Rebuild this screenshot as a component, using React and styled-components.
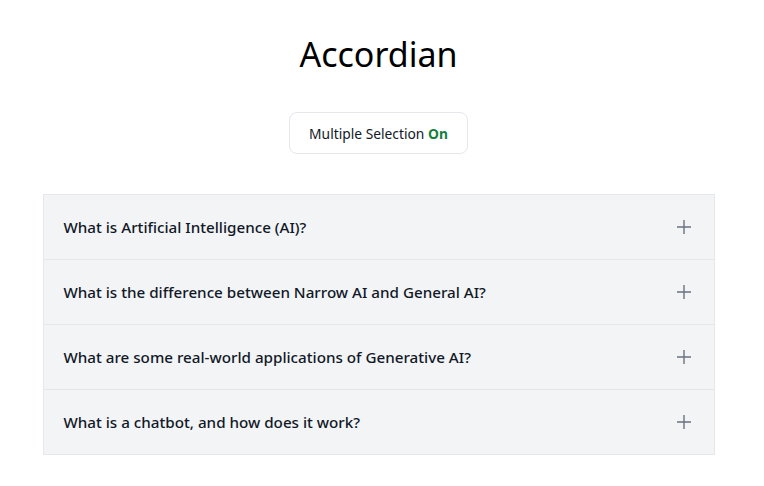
import React, { useState } from 'react';
import styled, { createGlobalStyle } from 'styled-components';

const GlobalStyle = createGlobalStyle`
  body {
    margin: 0;
    background: #ffffff;
    font-family: "Noto Sans", "Open Sans", sans-serif;
    color: #111827;
  }
`;

const faqs = [
  { id: 1, question: 'What is Artificial Intelligence (AI)?', answer: 'AI is the simulation of human intelligence by machines.' },
  { id: 2, question: 'What is the difference between Narrow AI and General AI?', answer: 'Narrow AI handles one task; General AI could handle any.' },
  { id: 3, question: 'What are some real-world applications of Generative AI?', answer: 'Text, image, music and code generation.' },
  { id: 4, question: 'What is a chatbot, and how does it work?', answer: 'A program that converses with users using language models.' },
];

const PlusIcon = () => (
  <svg width="16" height="16" viewBox="0 0 16 16" fill="none" stroke="currentColor" strokeWidth="1.4">
    <path d="M8 1v14M1 8h14" />
  </svg>
);

const App = () => {
  const [multiple, setMultiple] = useState(true);
  const [open, setOpen] = useState([]);

  const toggle = (id) => {
    if (multiple) {
      setOpen(open.includes(id) ? open.filter((x) => x !== id) : [...open, id]);
    } else {
      setOpen(open.includes(id) ? [] : [id]);
    }
  };

  return (
    <Page>
      <GlobalStyle />
      <Title>Accordian</Title>
      <ToggleButton onClick={() => setMultiple(!multiple)}>
        Multiple Selection <State on={multiple ? 1 : 0}>{multiple ? 'On' : 'Off'}</State>
      </ToggleButton>
      <Accordion>
        {faqs.map((item) => (
          <Item key={item.id}>
            <Header onClick={() => toggle(item.id)}>
              <Question>{item.question}</Question>
              <IconWrap>
                <PlusIcon />
              </IconWrap>
            </Header>
            {open.includes(item.id) && <Answer>{item.answer}</Answer>}
          </Item>
        ))}
      </Accordion>
    </Page>
  );
};

const Page = styled.div`
  display: flex;
  flex-direction: column;
  align-items: center;
  padding: 26px 7px 0 0;
`;

const Title = styled.h1`
  margin: 0;
  font-family: "Noto Sans", sans-serif;
  font-size: 34px;
  font-weight: 400;
  color: #000;
  line-height: 56px;
`;

const ToggleButton = styled.button`
  margin-top: 30px;
  height: 42px;
  padding: 0 19px;
  background: #fff;
  border: 1px solid #e5e7eb;
  border-radius: 8px;
  font-family: "Noto Sans", sans-serif;
  font-size: 13.8px;
  color: #111827;
  cursor: pointer;
`;

const State = styled.span`
  font-weight: 700;
  color: #15803d;
  ${({ on }) => !on && 'color: #b91c1c;'}
`;

const Accordion = styled.div`
  margin-top: 40px;
  width: 672px;
  border: 1px solid #e5e7eb;
  box-sizing: border-box;
`;

const Item = styled.div`
  background: #f3f4f6;
  & + & {
    border-top: 1px solid #e5e7eb;
  }
`;

const Header = styled.div`
  display: flex;
  align-items: center;
  justify-content: space-between;
  height: 64px;
  padding: 0 22px 0 20px;
  cursor: pointer;
`;

const Question = styled.span`
  font-size: 15.2px;
  font-weight: 500;
  color: #111827;
`;

const IconWrap = styled.span`
  display: flex;
  color: #6b7280;
`;

const Answer = styled.div`
  padding: 0 20px 20px;
  font-size: 14px;
  color: #4b5563;
`;

export default App;
